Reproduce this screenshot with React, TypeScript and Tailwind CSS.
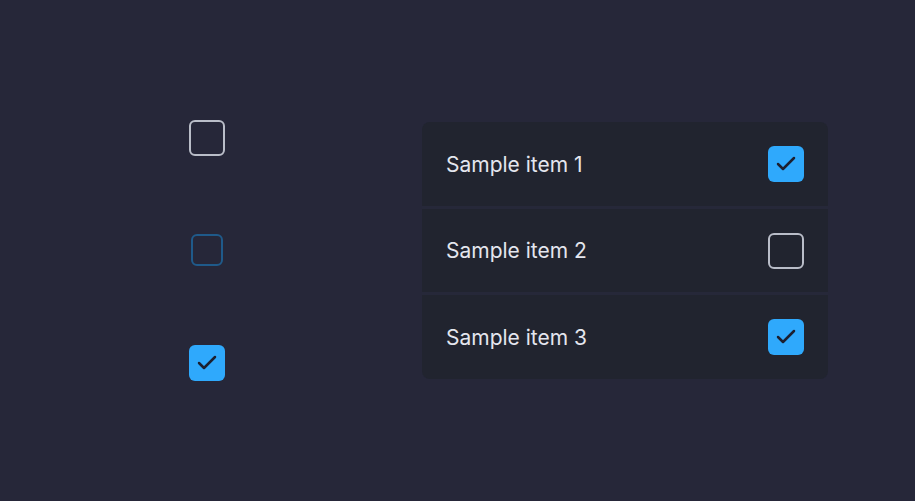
import { Check } from "lucide-react";

const items = [
  { id: 1, label: "Sample item 1", checked: true },
  { id: 2, label: "Sample item 2", checked: false },
  { id: 3, label: "Sample item 3", checked: true },
];

const Box = ({ checked }: { checked: boolean }) =>
  checked ? (
    <div className="w-9 h-9 rounded-md bg-[#2fa9fc] flex items-center justify-center">
      <Check className="w-6 h-6 text-[#1c2030]" strokeWidth={2.5} />
    </div>
  ) : (
    <div className="w-9 h-9 rounded-md border-2 border-[#b9bdc8]" />
  );

export default function App() {
  return (
    <div className="h-[501px] w-full bg-[#262739] flex pl-[189px] pt-[120px]" style={{ fontFamily: "Inter, 'Noto Sans', sans-serif" }}>
      {/* standalone checkboxes */}
      <div className="w-9 flex flex-col items-center">
        <Box checked={false} />
        <div className="mt-[78px] w-8 h-8 rounded-md border-2 border-[#1f5a8a]" />
        <div className="mt-[79px]">
          <Box checked />
        </div>
      </div>

      {/* list card */}
      <div className="ml-[197px] mt-[2px] w-[406px] h-[257px] rounded-lg overflow-hidden bg-[#262839] flex flex-col gap-[3px]">
        {items.map(item => (
          <div key={item.id} className="flex-1 bg-[#21242f] flex items-center justify-between px-6">
            <span className="text-[21px] text-[#e4e6ee] pt-[1px]">{item.label}</span>
            <Box checked={item.checked} />
          </div>
        ))}
      </div>
    </div>
  );
}
